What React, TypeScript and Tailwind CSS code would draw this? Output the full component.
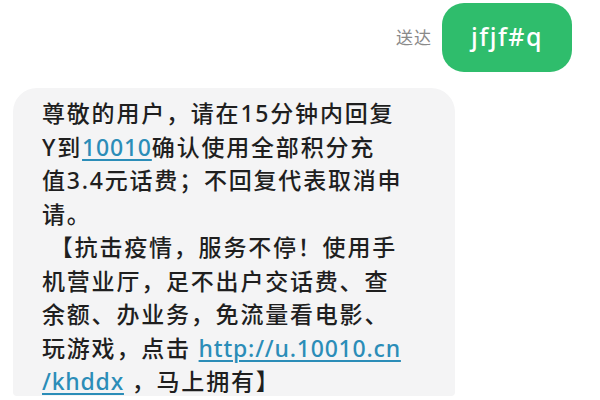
import React from 'react';

const Link: React.FC<{ children: React.ReactNode }> = ({ children }) => (
    <span className="text-[#2b8db8] tracking-[0.8px] underline decoration-[1.5px] underline-offset-[3px]">{children}</span>
);

const lines: React.ReactNode[] = [
    <>尊敬的用户，请在15分钟内回复</>,
    <>Y到<Link>10010</Link>确认使用全部积分充</>,
    <>值3.4元话费；不回复代表取消申</>,
    <>请。</>,
    <>&nbsp;【抗击疫情，服务不停！使用手</>,
    <>机营业厅，足不出户交话费、查</>,
    <>余额、办业务，免流量看电影、</>,
    <>玩游戏，点击 <Link>http://u.10010.cn</Link></>,
    <><Link>/khddx</Link> ，马上拥有】</>,
];

export default function App() {
    return (
        <div className="w-[600px] h-[400px] bg-white overflow-hidden font-['Noto_Sans','Noto_Sans_CJK_SC',sans-serif]">
            <div className="flex justify-end items-center gap-[10px] pt-[3px] pr-[28px]">
                <span className="text-[17px] tracking-[1px] text-[#8a8a8a]">送达</span>
                <div className="w-[130px] h-[69px] rounded-[22px] bg-[#2fbd6c] flex items-center justify-center">
                    <span className="text-white text-[25px] font-medium tracking-[1.5px] leading-none pb-[2px]">jfjf#q</span>
                </div>
            </div>
            <div className="mt-[16px] ml-[13px] w-[442px] h-[308px] bg-[#f4f4f5] rounded-t-[24px] rounded-b-[4px] pl-[29px] pt-[9px]">
                {lines.map((line, i) => (
                    <div key={i} className="whitespace-nowrap text-[23px] font-medium leading-[33.5px] tracking-[1.8px] text-[#1f1f1f]">
                        {line}
                    </div>
                ))}
            </div>
        </div>
    );
}
